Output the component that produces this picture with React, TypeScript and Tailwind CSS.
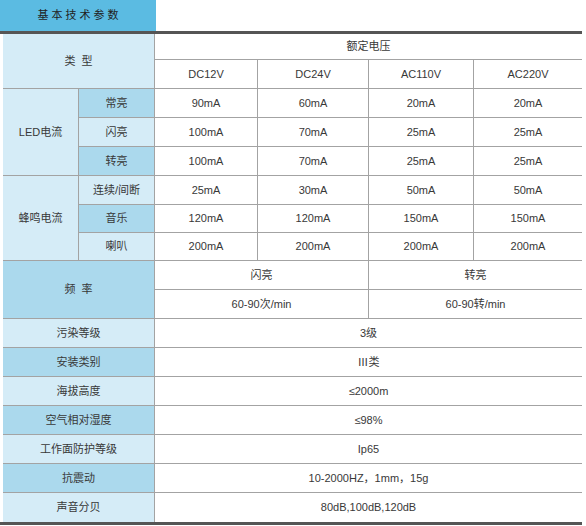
import React from "react";

// Basic technical parameter sheet, laid out as a fixed grid so the row lines land
// where the printed table has them.
const light = "bg-[#d5ecf7]";
const mid = "bg-[#abd9ed]";
const line = "border-[#a3a3a3]";

function Cell({
  children,
  className = "",
}: {
  children?: React.ReactNode;
  className?: string;
}) {
  return (
    <div
      className={`flex items-center justify-center border-b ${line} text-[11px] text-[#383838] whitespace-nowrap ${className}`}
    >
      {children}
    </div>
  );
}

const voltages = ["DC12V", "DC24V", "AC110V", "AC220V"];

const led: { label: string; bg: string; values: string[] }[] = [
  { label: "常亮", bg: mid, values: ["90mA", "60mA", "20mA", "20mA"] },
  { label: "闪亮", bg: light, values: ["100mA", "70mA", "25mA", "25mA"] },
  { label: "转亮", bg: mid, values: ["100mA", "70mA", "25mA", "25mA"] },
];

const buzzer: { label: string; bg: string; values: string[] }[] = [
  { label: "连续/间断", bg: light, values: ["25mA", "30mA", "50mA", "50mA"] },
  { label: "音乐", bg: mid, values: ["120mA", "120mA", "150mA", "150mA"] },
  { label: "喇叭", bg: light, values: ["200mA", "200mA", "200mA", "200mA"] },
];

const misc: { label: string; bg: string; value: string }[] = [
  { label: "污染等级", bg: light, value: "3级" },
  { label: "安装类别", bg: mid, value: "Ⅲ类" },
  { label: "海拔高度", bg: light, value: "≤2000m" },
  { label: "空气相对湿度", bg: mid, value: "≤98%" },
  { label: "工作面防护等级", bg: light, value: "Ip65" },
  { label: "抗震动", bg: mid, value: "10-2000HZ，1mm，15g" },
  { label: "声音分贝", bg: light, value: "80dB,100dB,120dB" },
];

export default function App() {
  return (
    <div
      className="w-[586px] h-[526px] bg-white"
      style={{ fontFamily: '"Liberation Sans", "Noto Sans CJK SC", sans-serif' }}
    >
      <div className="w-[582px]">
        <div className="w-[156px] h-[31px] bg-[#5bbbe2] flex items-center justify-center pl-[3px] text-[11px] text-[#222] tracking-[3px]">
          基本技术参数
        </div>
        <div className="border-t-[3px] border-[#555]">
          <div className="ml-[3px] grid grid-cols-[76px_76px_103px_111px_105px_108px] grid-rows-[26px_29px_29px_29px_29px_29px_28px_28px_29px_29px_29px_29px_29px_29px_29px_29px_29px]">
            {/* 类型 / 额定电压 */}
            <Cell className={`col-span-2 row-span-2 ${light} border-r pl-[6px] tracking-[6px]`}>
              类型
            </Cell>
            <Cell className="col-span-4">额定电压</Cell>
            {voltages.map((v, i) => (
              <Cell key={v} className={i < 3 ? "border-r" : ""}>
                {v}
              </Cell>
            ))}

            {/* LED电流 */}
            <Cell className={`row-span-3 ${light} border-r`}>LED电流</Cell>
            {led.map((r) => (
              <React.Fragment key={r.label}>
                <Cell className={`${r.bg} border-r`}>{r.label}</Cell>
                {r.values.map((v, i) => (
                  <Cell key={i} className={i < 3 ? "border-r" : ""}>
                    {v}
                  </Cell>
                ))}
              </React.Fragment>
            ))}

            {/* 蜂鸣电流 */}
            <Cell className={`row-span-3 ${light} border-r`}>蜂鸣电流</Cell>
            {buzzer.map((r) => (
              <React.Fragment key={r.label}>
                <Cell className={`${r.bg} border-r`}>{r.label}</Cell>
                {r.values.map((v, i) => (
                  <Cell key={i} className={i < 3 ? "border-r" : ""}>
                    {v}
                  </Cell>
                ))}
              </React.Fragment>
            ))}

            {/* 频率 */}
            <Cell className={`col-span-2 row-span-2 ${mid} border-r pl-[6px] tracking-[6px]`}>
              频率
            </Cell>
            <Cell className="col-span-2 border-r">闪亮</Cell>
            <Cell className="col-span-2">转亮</Cell>
            <Cell className="col-span-2 border-r">60-90次/min</Cell>
            <Cell className="col-span-2">60-90转/min</Cell>

            {misc.map((r, i) => (
              <React.Fragment key={r.label}>
                <Cell
                  className={`col-span-2 ${r.bg} border-r ${i === misc.length - 1 ? "border-b-0" : ""}`}
                >
                  {r.label}
                </Cell>
                <Cell className={`col-span-4 ${i === misc.length - 1 ? "border-b-0" : ""}`}>
                  {r.value}
                </Cell>
              </React.Fragment>
            ))}
          </div>
        </div>
        <div className="h-[3px] bg-[#555]" />
      </div>
    </div>
  );
}
